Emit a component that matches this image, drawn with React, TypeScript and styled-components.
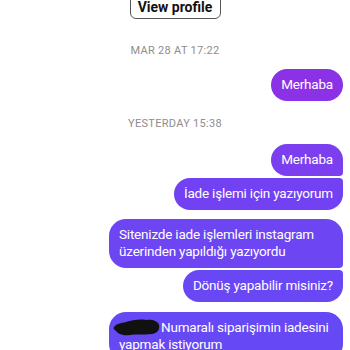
import styled, { createGlobalStyle } from 'styled-components';

const GlobalStyle = createGlobalStyle`
  body {
    margin: 0;
    background: #fff;
    font-family: Roboto, "Liberation Sans", sans-serif;
    overflow: hidden;
  }
`

const Thread = styled.div`
  width: 350px;
  height: 350px;
  overflow: hidden;
  display: flex;
  flex-direction: column;
  align-items: flex-end;
  padding-right: 7px;
  box-sizing: border-box;
  & > * {
    flex-shrink: 0;
  }
`
const ProfileButton = styled.div`
  align-self: center;
  margin-top: -15px;
  margin-right: -7px;
  height: 34px;
  width: 91px;
  border: 1.5px solid #555;
  border-radius: 6px;
  background: #fff;
  color: #111;
  font-size: 14px;
  font-weight: 700;
  box-sizing: border-box;
  display: flex;
  align-items: flex-end;
  justify-content: center;
  padding-bottom: 3px;
  line-height: 16px;
`
const Stamp = styled.div<{ $top: number; $bottom: number }>`
  align-self: center;
  margin-right: -7px;
  margin-top: ${p => p.$top}px;
  margin-bottom: ${p => p.$bottom}px;
  color: #8e8e8e;
  font-size: 11px;
  letter-spacing: 0.3px;
  line-height: 14px;
`
const Bubble = styled.div<{ $bg: string; $pos: 'solo' | 'first' | 'last'; $gap: number }>`
  margin-top: ${p => p.$gap}px;
  max-width: 234px;
  box-sizing: border-box;
  padding: 7px 10px 8px;
  background: ${p => p.$bg};
  color: #fff;
  font-size: 13.5px;
  letter-spacing: -0.2px;
  line-height: 17px;
  border-radius: ${p =>
    p.$pos === 'solo' ? '17px' : p.$pos === 'first' ? '17px 17px 4px 17px' : '17px 4px 17px 17px'};
`
const Scribble = styled.svg`
  display: inline-block;
  vertical-align: middle;
  width: 48px;
  height: 18px;
  margin-left: -7px;
  margin-right: 1px;
  margin-top: -2px;
`

export default function App() {
  return (
    <>
      <GlobalStyle />
      <Thread>
        <ProfileButton>View profile</ProfileButton>
        <Stamp $top={25} $bottom={11}>MAR 28 AT 17:22</Stamp>
        <Bubble $bg="#8b31e6" $pos="solo" $gap={0}>Merhaba</Bubble>
        <Stamp $top={16} $bottom={13}>YESTERDAY 15:38</Stamp>
        <Bubble $bg="#7b3ff0" $pos="first" $gap={0}>Merhaba</Bubble>
        <Bubble $bg="#7242f2" $pos="last" $gap={2}>İade işlemi için yazıyorum</Bubble>
        <Bubble $bg="#6d45f3" $pos="first" $gap={9}>
          Sitenizde iade işlemleri instagram üzerinden yapıldığı yazıyordu
        </Bubble>
        <Bubble $bg="#6a47f4" $pos="last" $gap={2}>Dönüş yapabilir misiniz?</Bubble>
        <Bubble $bg="#6649f4" $pos="solo" $gap={10}>
          <Scribble viewBox="0 0 48 18">
            <path
              d="M2 9 C4 6 9 5 14 4 C20 2 28 1 34 2 C40 1 46 3 47 7 C48 11 46 15 40 16 C32 17 24 16 18 17 C12 18 6 16 4 13 C2 12 1 10 2 9 Z"
              fill="#111"
            />
          </Scribble>
          Numaralı siparişimin iadesini yapmak istiyorum
        </Bubble>
      </Thread>
    </>
  );
}
